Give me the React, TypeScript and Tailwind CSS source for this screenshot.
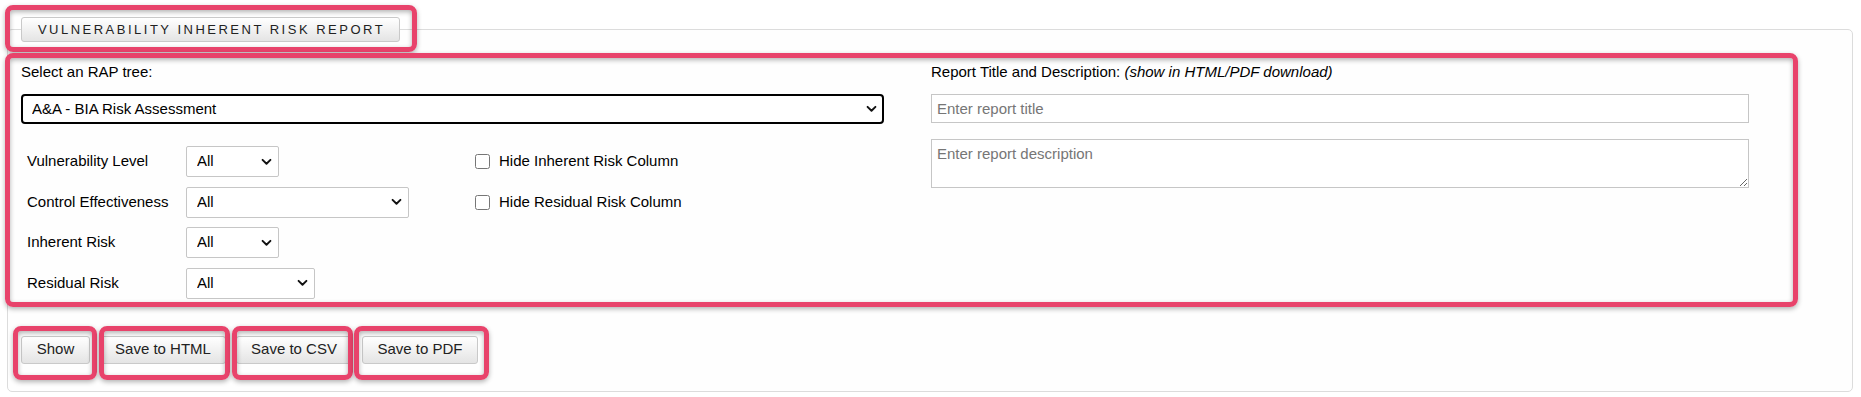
import React from "react";

const font = { fontFamily: '"Liberation Sans", Arial, sans-serif' };

const Chevron = () => (
  <svg
    aria-hidden
    viewBox="0 0 12 8"
    className="pointer-events-none absolute right-[7px] top-1/2 h-[7px] w-[11px] -translate-y-1/2"
  >
    <path d="M1.5 1.5 6 6l4.5-4.5" fill="none" stroke="#111" strokeWidth="2.2" strokeLinecap="round" strokeLinejoin="round" />
  </svg>
);

const Select = ({ w, value = "All" }: { w: string; value?: string }) => (
  <div className={`relative h-[31px] ${w}`}>
    <select className="h-full w-full appearance-none rounded-[2px] border border-[#c6c6c6] bg-white pl-[10px] text-[15px] text-black outline-none">
      <option>{value}</option>
    </select>
    <Chevron />
  </div>
);

const filters = [
  { label: "Vulnerability Level", w: "w-[93px]", check: "Hide Inherent Risk Column" },
  { label: "Control Effectiveness", w: "w-[223px]", check: "Hide Residual Risk Column" },
  { label: "Inherent Risk", w: "w-[93px]" },
  { label: "Residual Risk", w: "w-[129px]" },
];

// annotation outlines drawn over the form
const marks = [
  "left-[5px] top-[5px] h-[47px] w-[412px]",
  "left-[5px] top-[53px] h-[254px] w-[1793px]",
  "left-[13px] top-[326px] h-[54px] w-[84px]",
  "left-[99px] top-[326px] h-[54px] w-[131px]",
  "left-[232px] top-[326px] h-[54px] w-[121px]",
  "left-[354px] top-[326px] h-[54px] w-[135px]",
];

const btnBase =
  "rounded-[3px] border border-[#c9c9c9] bg-gradient-to-b from-white to-[#e4e4e4] text-[#222]";
const btn = `${btnBase} h-[28px] text-[15px]`;

export default function App() {
  return (
    <div style={font} className="relative h-[397px] w-full bg-white pl-[7px] pr-[8px] pt-[29px] text-[15px] text-black">
      <div className="flex h-[363px] flex-col rounded-[5px] border border-[#dcdcdc] bg-[#fefefe] px-[13px]">
        {/* legend */}
        <div className="-mt-[13px] self-start">
          <div className={`${btnBase} flex h-[25px] w-[379px] items-center justify-center whitespace-nowrap pl-[2px] text-[13px] uppercase tracking-[2.5px]`}>
            Vulnerability Inherent Risk Report
          </div>
        </div>

        <div className="mt-[21px] grid grid-cols-[863px_818px] gap-x-[47px]">
          {/* left column */}
          <div>
            <p className="h-[17px] leading-[17px]">Select an RAP tree:</p>
            <div className="relative mt-[14px] h-[30px] w-full">
              <select className="h-full w-full appearance-none rounded-[4px] border-2 border-black bg-white pl-[9px] text-[15px] text-black outline-none">
                <option>A&amp;A - BIA Risk Assessment</option>
              </select>
              <Chevron />
            </div>

            <div className="mt-[22px] flex flex-col gap-[9.5px] pl-[6px]">
              {filters.map((f) => (
                <div key={f.label} className="flex h-[31px] items-center">
                  <span className="w-[159px]">{f.label}</span>
                  <div className="w-[289px]">
                    <Select w={f.w} />
                  </div>
                  {f.check && (
                    <label className="flex items-center gap-[9px]">
                      <input type="checkbox" className="h-[15px] w-[15px] accent-[#767676]" />
                      <span>{f.check}</span>
                    </label>
                  )}
                </div>
              ))}
            </div>
          </div>

          {/* right column */}
          <div>
            <p className="h-[17px] leading-[17px]">
              Report Title and Description: <i>(show in HTML/PDF download)</i>
            </p>
            <input
              placeholder="Enter report title"
              className="mt-[14px] block h-[29px] w-full border border-[#c6c6c6] bg-white px-[5px] text-[15px] placeholder:text-[#767676] outline-none"
            />
            <textarea
              placeholder="Enter report description"
              className="mt-[16px] block h-[49px] w-full border border-[#c6c6c6] bg-white px-[5px] py-[3px] text-[15px] placeholder:text-[#767676] outline-none"
            />
          </div>
        </div>

        <div className="mt-[37px] flex gap-[10px]">
          <button className={`${btn} w-[69px]`}>Show</button>
          <button className={`${btn} w-[126px]`}>Save to HTML</button>
          <button className={`${btn} w-[116px]`}>Save to CSV</button>
          <button className={`${btn} w-[116px]`}>Save to PDF</button>
        </div>
      </div>

      {marks.map((m) => (
        <div
          key={m}
          aria-hidden
          className={`pointer-events-none absolute rounded-[8px] border-[5px] border-[#e8436b] shadow-[0_2px_5px_rgba(0,0,0,0.3),inset_0_2px_5px_rgba(0,0,0,0.3)] ${m}`}
        />
      ))}
    </div>
  );
}
